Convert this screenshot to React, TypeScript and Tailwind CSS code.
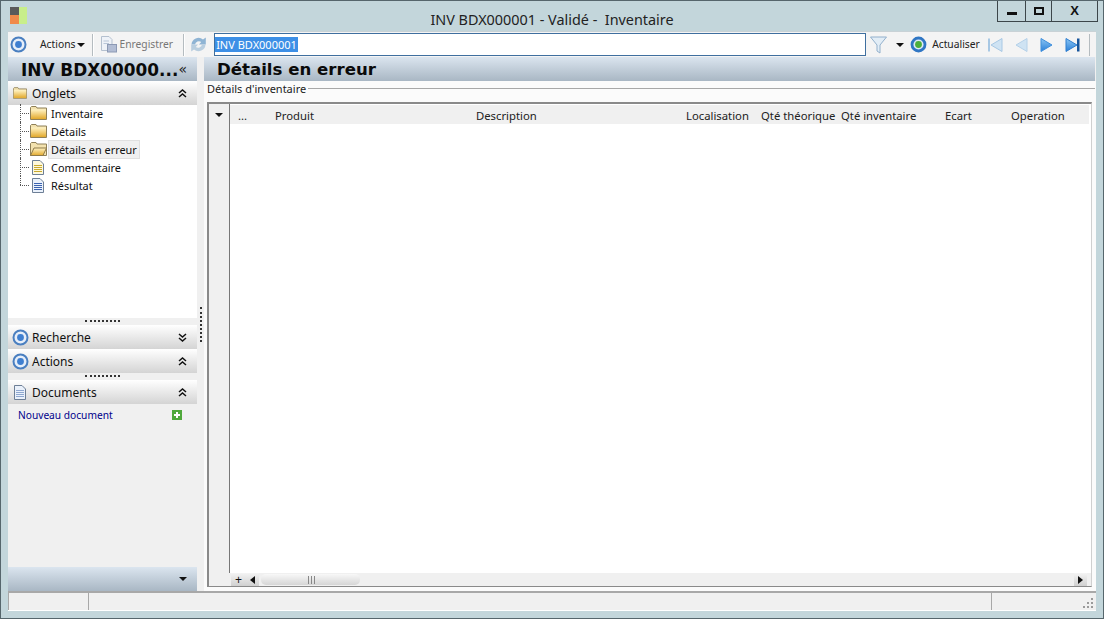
import React from "react";

const sans = "font-['Noto_Sans',sans-serif]";

function Target({ size = 17 }: { size?: number }) {
  return (
    <svg width={size} height={size} viewBox="0 0 17 17" className="shrink-0">
      <circle cx="8.5" cy="8.5" r="7" fill="#e6eef9" stroke="#4a7fc0" strokeWidth="2" />
      <circle cx="8.5" cy="8.5" r="3.4" fill="#3f7fd0" />
    </svg>
  );
}

function Folder({ open = false, id, w = 17, h = 14 }: { open?: boolean; id: string; w?: number; h?: number }) {
  return (
    <svg width={w} height={h} viewBox="0 0 17 14" className="shrink-0">
      <defs>
        <linearGradient id={id} x1="0" y1="0" x2="0" y2="1">
          <stop offset="0" stopColor="#fff3c4" />
          <stop offset="1" stopColor="#e2a92c" />
        </linearGradient>
      </defs>
      <path d="M0.5 1.5 L1.5 0.5 H6 L7 2 H16.5 V13.5 H0.5 Z" fill="#f3e2ae" stroke="#8f8058" />
      {open ? (
        <path d="M0.5 13.5 L4 6 H16.5 L13 13.5 Z" fill={`url(#${id})`} stroke="#8f7a48" />
      ) : (
        <rect x="1" y="3.5" width="15" height="9.5" fill={`url(#${id})`} />
      )}
    </svg>
  );
}

function Doc({ color, fill = "#fff" }: { color: string; fill?: string }) {
  return (
    <svg width="12" height="15" viewBox="0 0 12 15" className="shrink-0">
      <path d="M0.5 0.5 H8 L11.5 4 V14.5 H0.5 Z" fill={fill} stroke="#6d7f96" />
      <path d="M2 5.5 H10 M2 7.5 H10 M2 9.5 H10 M2 11.5 H10" stroke={color} strokeWidth="1" />
    </svg>
  );
}

function Chevrons({ down = false }: { down?: boolean }) {
  return (
    <svg width="9" height="9" viewBox="0 0 9 9" className="shrink-0">
      <path
        d={down ? "M1 1 L4.5 4 L8 1 M1 5 L4.5 8 L8 5" : "M1 4 L4.5 1 L8 4 M1 8 L4.5 5 L8 8"}
        fill="none"
        stroke="#111"
        strokeWidth="1.5"
      />
    </svg>
  );
}

function Caret({ className = "" }: { className?: string }) {
  return (
    <svg width="8" height="4" viewBox="0 0 8 4" className={`shrink-0 ${className}`}>
      <path d="M0 0 H8 L4 4 Z" fill="#111" />
    </svg>
  );
}

function Sep() {
  return <div className="w-px h-[22px] bg-[#b5bcc0] border-r border-white box-content" />;
}

function PanelHeader({ icon, label, down = false }: { icon: React.ReactNode; label: string; down?: boolean }) {
  return (
    <div className="h-[24px] shrink-0 flex items-center bg-gradient-to-b from-white to-[#d4d4d4] pr-[10px] pl-[3px]">
      <div className="w-[18px] flex justify-center">{icon}</div>
      <span className="ml-[3px] flex-1 text-[12px] leading-[24px] pt-px text-[#111]">{label}</span>
      <Chevrons down={down} />
    </div>
  );
}

function Dots() {
  return (
    <div className="h-[7px] shrink-0 flex justify-center items-start pt-[2px] bg-[#f0f0f0]">
      <div className="w-[35px] border-t-2 border-dotted border-[#333]" />
    </div>
  );
}

const treeItems = [
  { label: "Inventaire", icon: <Folder id="f1" /> },
  { label: "Détails", icon: <Folder id="f2" /> },
  { label: "Détails en erreur", icon: <Folder open id="f3" />, selected: true },
  { label: "Commentaire", icon: <Doc color="#c9a92e" fill="#fdf8dc" /> },
  { label: "Résultat", icon: <Doc color="#3a62b0" fill="#eaf1fb" /> },
];

const columns = [
  { label: "...", w: "w-[37px]" },
  { label: "Produit", w: "w-[201px]" },
  { label: "Description", w: "w-[210px]" },
  { label: "Localisation", w: "w-[75px]" },
  { label: "Qté théorique", w: "w-[80px]" },
  { label: "Qté inventaire", w: "w-[104px]" },
  { label: "Ecart", w: "w-[66px]" },
  { label: "Operation", w: "w-[70px]" },
];

export default function App() {
  return (
    <div className={`w-[1104px] h-[619px] overflow-hidden bg-[#c3d6db] border border-[#56666c] flex flex-col ${sans}`}>
      {/* title bar */}
      <div className="h-[30px] shrink-0 relative flex items-start pl-[9px] pt-[6px]">
        <svg width="17" height="17" viewBox="0 0 17 17">
          <rect x="0" y="0" width="9" height="8" fill="#5a5a5a" />
          <rect x="0" y="8" width="9" height="9" fill="#f08a4a" />
          <rect x="9" y="0" width="8" height="17" fill="#c8ee8a" />
        </svg>
        <span className="flex-1 text-center text-[14.4px] leading-[19px] pt-[3px] text-[#222] whitespace-pre pr-[26px]">
          INV BDX000001 - Validé -  Inventaire
        </span>
        <div className="absolute right-[5px] top-0 h-[21px] flex border border-t-0 border-[#3c464a] text-[#111]">
          <div className="w-[28px] flex items-center justify-center border-r border-[#3c464a]">
            <div className="w-[10px] h-[3px] bg-[#111] mt-[5px]" />
          </div>
          <div className="w-[26px] flex items-center justify-center border-r border-[#3c464a]">
            <div className="w-[10px] h-[8px] border-2 border-[#111]" />
          </div>
          <div className="w-[45px] flex items-center justify-center text-[13px] font-bold font-['Liberation_Sans',sans-serif]">X</div>
        </div>
      </div>

      <div className="flex-1 mx-[7px] mb-[7px] flex flex-col bg-[#f0f0f0] min-h-0">
        {/* toolbar */}
        <div className="h-[26px] shrink-0 flex items-center text-[10.3px] text-[#222] pl-[2px] border-t border-[#c9d2d6] bg-[#f4f4f4]">
          <Target />
          <span className="ml-[13px]">Actions</span>
          <Caret className="ml-[2px] mr-[7px]" />
          <Sep />
          <svg width="18" height="17" viewBox="0 0 18 17" className="ml-[6px]">
            <path d="M1.5 0.5 H9 L12 3.5 V14.5 H1.5 Z" fill="#eef2f8" stroke="#b4c0cf" />
            <path d="M3.5 5 H9 M3.5 7.5 H9" stroke="#b9c6d8" />
            <rect x="7.5" y="8.5" width="9" height="7.5" fill="#b2bdd4" stroke="#8c99b4" />
          </svg>
          <span className="ml-[1px] text-[#777]">Enregistrer</span>
          <div className="ml-[10px]"><Sep /></div>
          <svg width="17" height="17" viewBox="0 0 17 17" className="ml-[5px]">
            <path d="M1.5 8.5 A7 7 0 0 1 13 3.5 L15.8 1.5 V8.5 H9 L11.2 6 A4 4 0 0 0 5 8.5 Z" fill="#8fb4d4" />
            <path d="M15.5 8.5 A7 7 0 0 1 4 13.5 L1.2 15.5 V8.5 H8 L5.8 11 A4 4 0 0 0 12 8.5 Z" fill="#b9cedf" />
          </svg>
          <div className="ml-[7px] w-[652px] h-[23px] bg-white border border-[#3f6f9f] flex items-center">
            <span className="bg-[#3d8fe6] text-white text-[11px] leading-[15px] px-px">INV BDX000001</span>
          </div>
          <svg width="17" height="18" viewBox="0 0 17 18" className="ml-[4px]">
            <path d="M0.5 1 H16.5 L10 9 V17 L7 15 V9 Z" fill="#e2edf6" stroke="#92b0cc" />
          </svg>
          <Caret className="ml-[9px]" />
          <svg width="17" height="17" viewBox="0 0 17 17" className="ml-[6px]">
            <circle cx="8.5" cy="8.5" r="6.5" fill="#dfeaf5" stroke="#2f76c4" strokeWidth="2.8" />
            <circle cx="8.5" cy="8.5" r="3.4" fill="#4caf3c" />
          </svg>
          <span className="ml-[5px]">Actualiser</span>
          <svg width="100" height="16" viewBox="0 0 100 16" className="ml-[7px] shrink-0">
            <defs>
              <linearGradient id="navOn" x1="0" y1="0" x2="0" y2="1">
                <stop offset="0" stopColor="#8cc6f4" />
                <stop offset="1" stopColor="#2a7fd8" />
              </linearGradient>
            </defs>
            <rect x="1" y="1.5" width="2" height="13" fill="#a8c8e4" />
            <path d="M15 1.5 V14.5 L4 8 Z" fill="#cfe3f3" stroke="#a8c8e4" />
            <path d="M40 1.5 V14.5 L29 8 Z" fill="#cfe3f3" stroke="#b4d0e8" />
            <path d="M54 1.5 V14.5 L65 8 Z" fill="url(#navOn)" stroke="#3f8fdc" />
            <path d="M79 1.5 V14.5 L90 8 Z" fill="url(#navOn)" stroke="#2f7fd0" />
            <rect x="90" y="1.5" width="2.5" height="13" fill="#16559c" />
          </svg>
          <div className="ml-[2px] w-px h-[22px] bg-[#b5bcc0]" />
        </div>

        {/* main */}
        <div className="flex-1 flex min-h-0">
          {/* left panel */}
          <div className="w-[189px] shrink-0 flex flex-col">
            <div className="h-[24px] shrink-0 flex items-center bg-gradient-to-b from-[#dbe5ef] to-[#a9b7c4] pl-[13px] pr-[10px] font-['DejaVu_Sans',sans-serif]">
              <span className="flex-1 text-[16.9px] leading-[24px] pt-px font-bold text-[#0a0a0a] whitespace-nowrap">INV BDX00000...</span>
              <span className="text-[14px] leading-none text-[#222] -ml-[14px]">«</span>
            </div>
            <PanelHeader icon={<Folder id="f0" w={14} h={12} />} label="Onglets" />
            <div className="h-[213px] shrink-0 bg-white pl-[12px] flex flex-col text-[10.9px] text-[#111]">
              <div className="-mt-px flex flex-col">
                {treeItems.map((t, i) => (
                  <div key={t.label} className="h-[18px] flex items-center">
                    <div className="w-[9px] h-[18px] relative shrink-0">
                      <div className={`absolute left-0 top-0 border-l border-dotted border-[#555] ${i === treeItems.length - 1 ? "h-[9px]" : "h-[18px]"}`} />
                      <div className="absolute left-0 top-[9px] w-[9px] border-t border-dotted border-[#555]" />
                    </div>
                    <div className="w-[18px] flex justify-center">{t.icon}</div>
                    <span className={`ml-[1px] px-[2px] leading-[17px] ${t.selected ? "bg-[#f0f0f0] border border-[#e0e0e0]" : "border border-transparent"}`}>{t.label}</span>
                  </div>
                ))}
              </div>
            </div>
            <Dots />
            <PanelHeader icon={<Target />} label="Recherche" down />
            <PanelHeader icon={<Target />} label="Actions" />
            <Dots />
            <PanelHeader icon={<Doc color="#8fa8d0" fill="#eaf1fb" />} label="Documents" />
            <div className="flex-1 bg-[#f0f0f0] pl-[10px] pr-[15px] pt-[2px] flex items-start justify-between">
              <span className="text-[10.2px] leading-[18px] text-[#00008b]">Nouveau document</span>
              <svg width="10" height="10" viewBox="0 0 10 10" className="mt-[4px]">
                <rect width="10" height="10" fill="#4fa83c" />
                <path d="M5 2 V8 M2 5 H8" stroke="#fff" strokeWidth="2" />
              </svg>
            </div>
            <div className="h-[24px] shrink-0 flex items-center justify-end pr-[10px] bg-gradient-to-b from-[#dbe5ef] to-[#a9b7c4]">
              <Caret />
            </div>
          </div>

          {/* splitter */}
          <div className="w-[7px] shrink-0 flex items-center justify-center">
            <div className="h-[35px] border-l-2 border-dotted border-[#333]" />
          </div>

          {/* right */}
          <div className="flex-1 min-w-0 flex flex-col">
            <div className="h-[24px] shrink-0 mr-px flex items-center bg-gradient-to-b from-[#dbe5ef] to-[#a9b7c4] pl-[13px] font-['DejaVu_Sans',sans-serif]">
              <span className="text-[16.6px] leading-[24px] pt-px font-bold text-[#0a0a0a]">Détails en erreur</span>
            </div>
            <div className="flex-1 min-h-0 flex flex-col pl-[3px] pr-[4px] bg-[#fbfbfb]">
              <div className="h-[14px] -ml-[3px] -mr-[4px] pl-[3px] pr-px flex items-center shrink-0">
                <span className="text-[11px] leading-[15px] text-[#222] pr-[2px]">Détails d'inventaire</span>
                <div className="flex-1 h-px bg-[#a8a8a8]" />
              </div>
              <div className="h-[7px] shrink-0" />
              <div className="h-[485px] shrink-0 border-2 border-b border-r border-[#8a8a8a] border-r-[#d0d0d0] flex flex-col bg-white">
                <div className="flex-1 min-h-0 flex">
                  <div className="w-[21px] shrink-0 bg-[#f0f0f0] border-r border-[#777] flex justify-center pt-[9px]">
                    <Caret />
                  </div>
                  <div className="flex-1 min-w-0">
                    <div className="h-[19px] mt-[1px] mr-[2px] bg-[#f0f0f0] flex items-center pl-[8px] text-[11.3px] leading-none pt-[2px] text-[#222]">
                      {columns.map((c) => (
                        <span key={c.label} className={`${c.w} shrink-0 whitespace-nowrap`}>{c.label}</span>
                      ))}
                    </div>
                  </div>
                </div>
                <div className="h-[13px] shrink-0 flex items-center bg-[#f0f0f0] pl-[22px] pr-[4px]">
                  <div className="w-[15px] h-[13px] flex items-center justify-center bg-gradient-to-b from-[#f4f4f4] to-[#d0d0d0] text-[12px] leading-none font-['Liberation_Sans',sans-serif] text-[#111]">+</div>
                  <div className="w-[13px] h-[13px] flex items-center justify-center bg-gradient-to-b from-[#f4f4f4] to-[#d0d0d0]">
                    <svg width="5" height="8" viewBox="0 0 5 8"><path d="M5 0 V8 L0 4 Z" fill="#111" /></svg>
                  </div>
                  <div className="w-[99px] h-[11px] ml-[2px] rounded-[5px] bg-gradient-to-b from-[#f8f8f8] to-[#d6d6d6] flex items-center justify-center pl-[2px]">
                    <div className="w-[7px] h-[8px] border-x border-[#888] flex justify-center"><div className="w-px h-full bg-[#888]" /></div>
                  </div>
                  <div className="flex-1" />
                  <div className="w-[13px] h-[13px] flex items-center justify-center bg-gradient-to-b from-[#f4f4f4] to-[#d0d0d0]">
                    <svg width="5" height="8" viewBox="0 0 5 8"><path d="M0 0 V8 L5 4 Z" fill="#111" /></svg>
                  </div>
                </div>
              </div>
              <div className="flex-1 min-h-0" />
            </div>
          </div>
        </div>

        {/* status bar */}
        <div className="h-[20px] shrink-0 flex bg-[#f0f0f0] border-t-2 border-b border-t-[#a8a8a8] border-b-white">
          <div className="w-[81px] border-x border-[#a8a8a8]" />
          <div className="flex-1" />
          <div className="w-[105px] border-l border-[#a8a8a8] flex items-end justify-end pr-[3px] pb-[2px]">
            <svg width="11" height="11" viewBox="0 0 11 11">
              <path d="M9 1h2v2H9zM5 5h2v2H5zM9 5h2v2H9zM1 9h2v2H1zM5 9h2v2H5zM9 9h2v2H9z" fill="#9a9a9a" />
            </svg>
          </div>
        </div>
      </div>
    </div>
  );
}
